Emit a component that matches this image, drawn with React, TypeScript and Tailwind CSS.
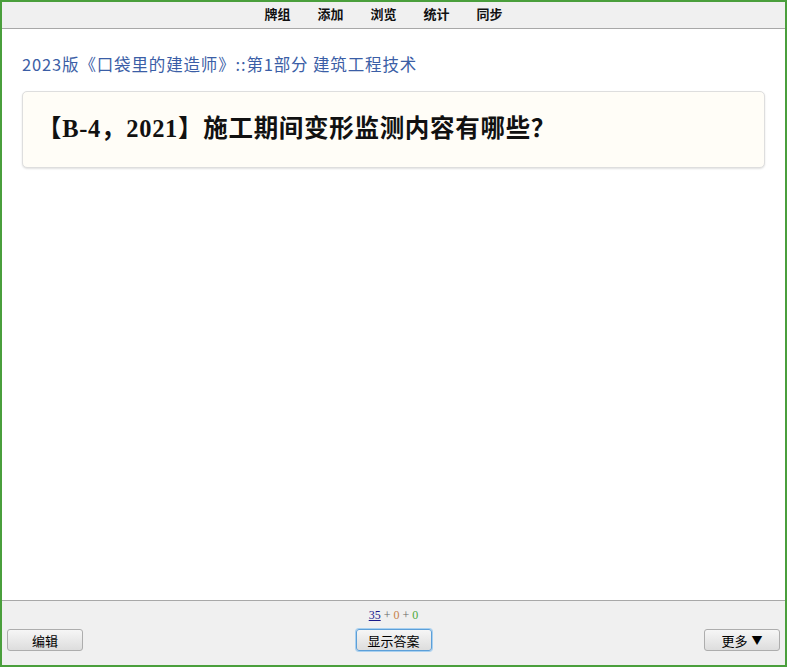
import React from "react";

const btn =
  "h-[22px] w-[76px] rounded-[3px] border border-[#adadad] bg-gradient-to-b from-[#f6f6f6] to-[#dddddd] text-[13px] text-black leading-none flex items-center justify-center";

export default function App() {
  return (
    <div className="w-[787px] h-[667px] border-2 border-[#4a9f3c] flex flex-col bg-white overflow-hidden" style={{ fontFamily: '"Noto Sans CJK SC", sans-serif' }}>
      <div className="h-[27px] shrink-0 bg-[#f0f0f0] border-b border-[#a8a8a8] flex items-center justify-center gap-[27px] pr-[20px] pb-[4px]">
        {["牌组", "添加", "浏览", "统计", "同步"].map((t) => (
          <span key={t} className="text-[13px] font-bold text-[#111] leading-none">{t}</span>
        ))}
      </div>
      <div className="flex-1 bg-white px-[20px] pt-[23px]">
        <div className="text-[16.5px] tracking-[0.85px] text-[#3b5ea6] leading-[24px] whitespace-nowrap">
          2023版《口袋里的建造师》::第1部分 建筑工程技术
        </div>
        <div className="mt-[15px] h-[77px] rounded-[5px] border border-[#dedede] bg-[#fffdf7] shadow-[0_1px_2px_rgba(0,0,0,0.12)] flex items-center px-[14px]">
          <span className="text-[24.5px] tracking-[0.7px] font-bold text-[#111] leading-none whitespace-nowrap" style={{ fontFamily: '"Liberation Serif", "Noto Sans CJK SC", serif' }}>
            【B-4，2021】施工期间变形监测内容有哪些？
          </span>
        </div>
      </div>
      <div className="h-[65px] shrink-0 bg-[#f0f0f0] border-t border-[#a8a8a8] flex flex-col">
        <div className="pt-[8px] h-[21px] flex items-start justify-center text-[12px] leading-[12px]" style={{ fontFamily: '"Liberation Serif", serif' }}>
          <span className="text-[#1a1a8c] underline">35</span>
          <span className="text-[#666] mx-[3px]">+</span>
          <span className="text-[#c8804a]">0</span>
          <span className="text-[#666] mx-[3px]">+</span>
          <span className="text-[#4caa3c]">0</span>
        </div>
        <div className="flex items-center justify-between px-[5px] pt-[7px]">
          <button className={btn}>编辑</button>
          <button className={btn + " !border-[#5c9fd8] ring-1 ring-[#a8d0f0]"}>显示答案</button>
          <button className={btn + " gap-[4px]"}><span>更多</span><span className="text-[11px]">▼</span></button>
        </div>
      </div>
    </div>
  );
}
